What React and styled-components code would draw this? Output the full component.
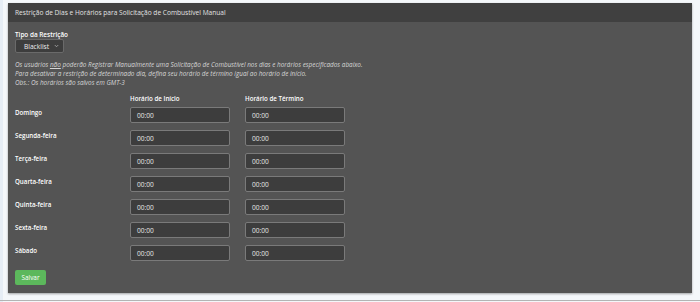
import React from "react";
import styled, { createGlobalStyle } from "styled-components";

const GlobalStyle = createGlobalStyle`
  html, body {
    margin: 0;
    padding: 0;
    background: #f4f7fa;
    font-family: "Open Sans", "DejaVu Sans", sans-serif;
  }
`;

const Page = styled.div`
  height: 302px;
  box-sizing: border-box;
  padding: 3px 8px 0 5px;
  border-left: 3px solid #e6edf5;
  display: flex;
  flex-direction: column;
`;

const Panel = styled.div`
  background: #545454;
  height: 290px;
  box-shadow: 0 1px 2px rgba(0, 0, 0, 0.35);
  display: flex;
  flex-direction: column;
`;

const PanelHeader = styled.div`
  background: #404040;
  height: 19px;
  line-height: 19px;
  padding-left: 7px;
  color: #e2e2e2;
  font-size: 6.6px;
`;

const PanelBody = styled.div`
  padding: 8px 7px 8px 7px;
  color: #f0f0f0;
`;

const FieldLabel = styled.div`
  font-weight: 600;
  font-size: 6.4px;
  line-height: 9px;
  color: #fff;
`;

const Select = styled.div`
  width: 49px;
  height: 14px;
  box-sizing: border-box;
  background: #3d3d3d;
  border: 1px solid #6a6a6a;
  border-radius: 2px;
  display: flex;
  align-items: center;
  justify-content: space-between;
  padding: 0 4px 0 8px;
  font-size: 6.6px;
  color: #eee;
`;

const Chevron = styled.svg`
  width: 5px;
  height: 4px;
`;

const Help = styled.div`
  margin-top: 7px;
  font-style: italic;
  font-size: 6.4px;
  line-height: 9px;
  color: #d6d6d6;

  u {
    text-decoration: underline;
  }
`;

const Grid = styled.div`
  margin-top: 7px;
  display: grid;
  grid-template-columns: 100px 100px 100px;
  column-gap: 15px;
  row-gap: 7px;
  align-items: start;
`;

const ColHead = styled.div`
  font-weight: 600;
  font-size: 6.2px;
  line-height: 9px;
  color: #fff;
  margin-bottom: -3px;
`;

const DayLabel = styled.div`
  font-weight: 600;
  font-size: 6.2px;
  line-height: 9px;
  padding-top: 1px;
  color: #fff;
`;

const TimeInput = styled.div`
  height: 16px;
  box-sizing: border-box;
  background: #3d3d3d;
  border: 1px solid #7a7a7a;
  border-radius: 2px;
  padding-left: 6px;
  display: flex;
  align-items: center;
  font-size: 6.6px;
  color: #e6e6e6;
`;

const SaveButton = styled.button`
  margin-top: 9px;
  width: 31px;
  height: 15px;
  padding: 0;
  border: none;
  border-radius: 2px;
  background: #5cb85c;
  color: #fff;
  font-family: inherit;
  font-size: 6.4px;
`;

const BottomLine = styled.div`
  margin-top: 7px;
  height: 1px;
  background: #b4b4b4;
  margin-left: -8px;
  margin-right: -8px;
`;

const days = [
  "Domingo",
  "Segunda-feira",
  "Terça-feira",
  "Quarta-feira",
  "Quinta-feira",
  "Sexta-feira",
  "Sábado",
];

function App() {
  return (
    <>
      <GlobalStyle />
      <Page>
        <Panel>
          <PanelHeader>
            Restrição de Dias e Horários para Solicitação de Combustível Manual
          </PanelHeader>
          <PanelBody>
            <FieldLabel>Tipo da Restrição</FieldLabel>
            <Select>
              Blacklist
              <Chevron viewBox="0 0 10 8">
                <path d="M1.5 2 L5 5.5 L8.5 2" fill="none" stroke="#bbb" strokeWidth="1.4" />
              </Chevron>
            </Select>
            <Help>
              Os usuários <u>não</u> poderão Registrar Manualmente uma Solicitação de
              Combustível nos dias e horários especificados abaixo.
              <br />
              Para desativar a restrição de determinado dia, defina seu horário de
              término igual ao horário de início.
              <br />
              Obs.: Os horários são salvos em GMT-3
            </Help>
            <Grid>
              <div />
              <ColHead>Horário de Início</ColHead>
              <ColHead>Horário de Término</ColHead>
              {days.map((d) => (
                <React.Fragment key={d}>
                  <DayLabel>{d}</DayLabel>
                  <TimeInput>00:00</TimeInput>
                  <TimeInput>00:00</TimeInput>
                </React.Fragment>
              ))}
            </Grid>
            <SaveButton>Salvar</SaveButton>
          </PanelBody>
        </Panel>
        <BottomLine />
      </Page>
    </>
  );
}

export default App;
